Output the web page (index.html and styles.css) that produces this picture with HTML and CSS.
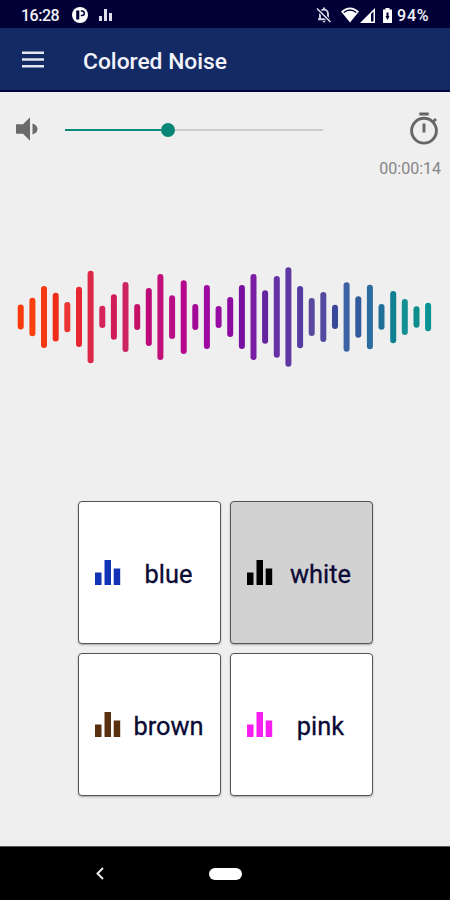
FILE: index.html
```html
<!DOCTYPE html>
<html>
<head>
    <meta charset="utf-8">
    <title>Colored Noise</title>
    <link rel="stylesheet" href="styles.css">
</head>

<body>
<div class="screen">
    <div class="status">
        <span class="clock">16:28</span>
        <svg class="parking" width="16" height="16" viewBox="0 0 16 16">
            <circle cx="8" cy="8" r="8" fill="#fff"/>
            <path d="M4.200 3.500H7.300V12.500H4.200Z" fill="#000037"/>
            <path d="M8.800 4H10A2.300 2.300 0 0 1 10 8.600H8.800" fill="none" stroke="#000037" stroke-width="1.500"/>
        </svg>
        <svg class="bars-small" width="13" height="12" viewBox="0 0 13 12" fill="#dedee8">
            <path d="M0 7h3v5H0zM5 0h3v12H5zM10 4h3v8h-3z"/>
        </svg>
        <svg class="bell" width="16" height="16" viewBox="0 0 16 16">
            <path d="M4 12V7A4 4.500 0 0 1 12 7V12M2 12.300H14M8 0.500V3" fill="none" stroke="#d4d4e2" stroke-width="1.900"/>
            <path d="M6.300 14H9.700L8 15.700Z" fill="#d4d4e2"/>
            <path d="M1 1.500L14.500 15" stroke="#000037" stroke-width="3.500"/>
            <path d="M1 1.500L14.500 15" stroke="#dedee8" stroke-width="1.600"/>
        </svg>
        <svg class="wifi" width="18" height="16" viewBox="0 0 18 16">
            <path d="M0 4.500Q9 -3.500 18 4.500L9 15.500Z" fill="#fff"/>
            <path d="M2.700 5.500Q9 0.500 15.300 5.500" fill="none" stroke="#000037" stroke-width="1.300"/>
        </svg>
        <svg class="signal" width="15" height="15" viewBox="0 0 15 15">
            <path d="M0 15L15 0V15Z" fill="#fff"/>
            <path d="M11 6L13.500 3.500V13.500H11Z" fill="#000037"/>
        </svg>
        <svg class="battery" width="9" height="15" viewBox="0 0 9 15">
            <path d="M2.500 0H6.500V1.500H9V15H0V1.500H2.500Z" fill="#fff"/>
            <path d="M3.500 4.500H5.500V8H6.500L4.500 12L2.500 8H3.500Z" fill="#000037"/>
        </svg>
        <span class="percent">94%</span>
    </div>

    <div class="appbar">
        <svg width="22" height="17" viewBox="0 0 22 17" fill="#e4e6f2">
            <path d="M0 0.500H22V3H0zM0 7.200H22V9.700H0zM0 13.900H22V16.400H0z"/>
        </svg>
        <span class="title">Colored Noise</span>
    </div>

    <div class="controls">
        <svg class="speaker" width="22" height="24" viewBox="0 0 22 24" fill="#6b6b6b">
            <path d="M0 7.300H7L14 0.300V23.700L7 16.700H0Z"/>
            <path d="M16.500 6.500Q21.500 8 21.500 12Q21.500 16 16.500 17.500Z"/>
        </svg>
        <div class="slider">
            <div class="filled"></div>
            <div class="thumb"></div>
            <div class="rest"></div>
        </div>
        <svg class="timer" width="28" height="33" viewBox="0 0 28 33" fill="none" stroke="#666" stroke-width="2.900">
            <circle cx="14" cy="18.700" r="12.400"/>
            <path d="M9.300 2H18.700M14 11.500V20.500M22.500 10.200L26 7"/>
        </svg>
    </div>
    <div class="time">00:00:14</div>

    <!-- sound wave -->
    <div class="wave">
        <svg width="450" height="120" viewBox="0 0 450 120" fill="none" stroke-width="6" stroke-linecap="round">
            <path stroke="#fa3a0a" d="M20.700 52.500V71.500"/>
            <path stroke="#fa400f" d="M32.400 45.800V78.200"/>
            <path stroke="#f43812" d="M44 34V90"/>
            <path stroke="#ef2d18" d="M55.700 40.800V83.500"/>
            <path stroke="#ec3434" d="M67.300 50V74.300"/>
            <path stroke="#e62732" d="M79 34.800V89"/>
            <path stroke="#dc2747" d="M90.600 18.700V105.300"/>
            <path stroke="#d4245a" d="M102.300 53.700V70"/>
            <path stroke="#d01c56" d="M113.900 42.300V81.700"/>
            <path stroke="#cc2460" d="M125.500 30V94"/>
            <path stroke="#c51268" d="M137.200 52V72"/>
            <path stroke="#bd087a" d="M148.800 36V88"/>
            <path stroke="#c01079" d="M160.400 22V102"/>
            <path stroke="#b90d83" d="M172.100 43.300V81"/>
            <path stroke="#b5088d" d="M183.700 28.300V96"/>
            <path stroke="#a30a96" d="M195.300 52V72"/>
            <path stroke="#9c08a0" d="M206.900 33V91"/>
            <path stroke="#970ba2" d="M218.600 54V70"/>
            <path stroke="#8c0b9e" d="M230.200 45V79"/>
            <path stroke="#7910a0" d="M241.900 33V91"/>
            <path stroke="#7a1ea6" d="M253.500 22V102"/>
            <path stroke="#6424a0" d="M265.100 38.300V85.700"/>
            <path stroke="#6630a6" d="M276.800 24V99.700"/>
            <path stroke="#6038a4" d="M288.400 15.300V108.700"/>
            <path stroke="#533ba1" d="M300.100 34V90.300"/>
            <path stroke="#5a489f" d="M311.700 46V78"/>
            <path stroke="#534a9f" d="M323.300 40V84"/>
            <path stroke="#3a489c" d="M335 52.700V71"/>
            <path stroke="#3d62a4" d="M346.600 30.300V93.700"/>
            <path stroke="#315b9c" d="M358.300 44.300V79.700"/>
            <path stroke="#2c6c9e" d="M369.900 32.700V91.300"/>
            <path stroke="#206f99" d="M381.500 52V71.700"/>
            <path stroke="#128093" d="M393.200 39V85.300"/>
            <path stroke="#149095" d="M404.800 47V77"/>
            <path stroke="#0d8d8c" d="M416.500 54.300V69.700"/>
            <path stroke="#0c9292" d="M428.100 50.700V73.300"/>
        </svg>
    </div>

    <div class="noises">
        <div class="noise blue">
            <svg class="icon" width="26" height="25" viewBox="0 0 26 25"><path d="M0 12.500h6.500V25H0zM9.500 0h6.500v25H9.500zM18.700 8.500h6.500V25H18.700z"/></svg>
            <span class="name">blue</span>
        </div>
        <div class="noise white">
            <svg class="icon" width="26" height="25" viewBox="0 0 26 25"><path d="M0 12.500h6.500V25H0zM9.500 0h6.500v25H9.500zM18.700 8.500h6.500V25H18.700z"/></svg>
            <span class="name">white</span>
        </div>
        <div class="noise brown">
            <svg class="icon" width="26" height="25" viewBox="0 0 26 25"><path d="M0 12.500h6.500V25H0zM9.500 0h6.500v25H9.500zM18.700 8.500h6.500V25H18.700z"/></svg>
            <span class="name">brown</span>
        </div>
        <div class="noise pink">
            <svg class="icon" width="26" height="25" viewBox="0 0 26 25"><path d="M0 12.500h6.500V25H0zM9.500 0h6.500v25H9.500zM18.700 8.500h6.500V25H18.700z"/></svg>
            <span class="name">pink</span>
        </div>
    </div>

    <div class="navbar">
        <svg class="back" width="8" height="13" viewBox="0 0 8 13" fill="none" stroke="#e8e8e8" stroke-width="2">
            <path d="M7 1L1.500 6.500L7 12"/>
        </svg>
        <div class="home"></div>
    </div>
</div>
</body>
</html>
```
FILE: styles.css
```css
body {
    margin: 0;
    font-family: Roboto, "Liberation Sans", sans-serif;
}

svg {
    display: block;
    flex-shrink: 0;
}

.screen {
    display: flex;
    flex-direction: column;
    width: 450px;
    height: 900px;
    background-color: #efefef;
    overflow: hidden;
}

/* Top bars */
.status {
    display: flex;
    align-items: center;
    box-sizing: border-box;
    height: 28px;
    padding: 2px 19px 0 21px;
    background-color: #000037;
    color: #f4f4f8;
    font-size: 16px;
    font-weight: 500;
    line-height: 26px;
}

.clock {
    width: 51px;
    padding-top: 1px;
    letter-spacing: -0.5px;
}

.bars-small {
    margin-left: 11px;
}

.bell {
    margin-left: auto;
}

.wifi {
    margin-left: 9px;
}

.signal {
    margin-left: 1px;
}

.battery {
    margin-left: 8px;
}

.percent {
    width: 34px;
    margin-left: 5px;
    padding-top: 1px;
    letter-spacing: 0.8px;
}

.appbar {
    display: flex;
    align-items: center;
    box-sizing: border-box;
    height: 64px;
    padding: 0 21px 0 22px;
    background-color: #132a65;
    border-bottom: 2px solid #04043f;
}

.title {
    margin: 4px 0 0 39px;
    color: #f3f4fb;
    font-size: 22.8px;
    font-weight: 500;
}

/* Volume and timer */
.controls {
    display: flex;
    align-items: center;
    height: 73px;
    padding: 0 12px 0 16px;
}

.slider {
    display: flex;
    align-items: center;
    width: 258px;
    margin: 3px 0 0 27px;
}

.filled {
    width: 96px;
    height: 2px;
    background-color: #0e8a79;
}

.thumb {
    width: 14px;
    height: 14px;
    border-radius: 50%;
    background-color: #0a8676;
}

.rest {
    flex: 1;
    height: 2px;
    background-color: #cccccc;
}

.timer {
    margin-left: auto;
}

.time {
    height: 20px;
    margin-top: -6px;
    padding-right: 9px;
    color: #858585;
    font-size: 16px;
    line-height: 20px;
    text-align: right;
}

.wave {
    height: 120px;
    margin-top: 76px;
}

/* Noise buttons */
.noises {
    display: grid;
    grid-template-columns: 143px 143px;
    grid-template-rows: 143px 143px;
    gap: 9px;
    margin: 126px 0 0 78px;
}

.noise {
    display: flex;
    align-items: center;
    box-sizing: border-box;
    padding: 0 4px 0 16px;
    border: 1px solid #555555;
    border-radius: 4px;
    background-color: #ffffff;
    box-shadow: 0 1px 2px rgba(0, 0, 0, 0.3);
}

.name {
    flex: 1;
    padding-top: 3px;
    color: #0a0a35;
    font-size: 25.4px;
    text-align: center;
    -webkit-text-stroke: 0.3px #0a0a35;
}

.blue {
    fill: #1233b8;
}

.white {
    background-color: #d2d2d2;
    fill: #000000;
}

.brown {
    fill: #58300e;
}

.pink {
    fill: #f51df0;
}

/* Bottom navigation */
.navbar {
    display: flex;
    align-items: center;
    box-sizing: border-box;
    height: 54px;
    margin-top: auto;
    padding-left: 96px;
    border-top: 1px solid #555555;
    background-color: #000000;
}

.home {
    width: 33px;
    height: 12px;
    margin-left: 105px;
    border-radius: 6px;
    background-color: #ffffff;
}
```
